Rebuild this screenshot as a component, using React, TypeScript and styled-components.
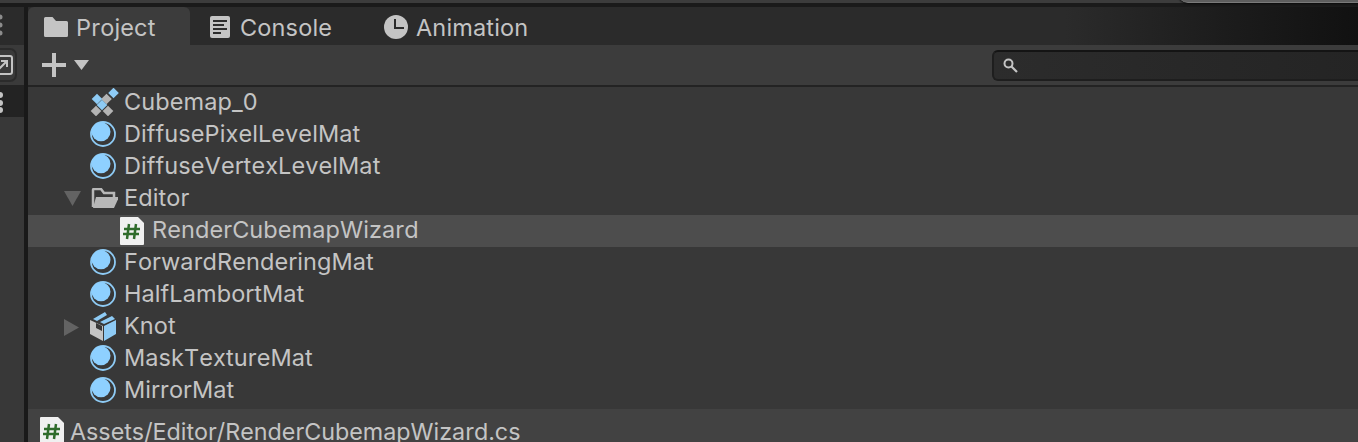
import { ReactNode } from "react";
import styled, { createGlobalStyle } from "styled-components";

const GlobalStyle = createGlobalStyle`
  html, body {
    margin: 0;
    padding: 0;
    background: #191919;
    overflow: hidden;
  }
`;

const Page = styled.div`
  width: 1358px;
  height: 442px;
  overflow: hidden;
  display: flex;
  flex-direction: column;
  font-family: Inter, "Liberation Sans", sans-serif;
  font-kerning: none;
  color: #c4c4c4;
`;

const TopStrip = styled.div`
  position: relative;
  height: 3px;
  flex: none;
  background: #3c3c3c;
  border-bottom: 4px solid #1a1a1a;
`;

const Popup = styled.div`
  position: absolute;
  top: -8px;
  left: 1178px;
  width: 200px;
  height: 10px;
  background: #5e5e5e;
  border-bottom: 1px solid #7a7a7a;
  border-radius: 0 0 0 10px;
  box-shadow: 0 1px 2px #0b0b0b;
`;

const Main = styled.div`
  flex: 1;
  min-height: 0;
  display: flex;
`;

const SideBar = styled.aside`
  width: 24px;
  flex: none;
  display: flex;
  flex-direction: column;
  background: #383838;
  border-right: 4px solid #191919;
`;

const SideHandle = styled.div`
  height: 38px;
  flex: none;
  box-sizing: border-box;
  padding-top: 7px;
  background: #2b2b2b;
`;

const SideTools = styled.div`
  height: 42px;
  flex: none;
  box-sizing: border-box;
  padding-top: 3px;
  background: #3a3a3a;
  border-bottom: 2px solid #232323;
`;

const SideButton = styled.div`
  width: 17px;
  height: 34px;
  box-sizing: border-box;
  display: flex;
  align-items: center;
  border: 2px solid #2b2b2b;
  border-left: none;
  border-radius: 0 7px 7px 0;
`;

const SideRow = styled.div`
  height: 30px;
  flex: none;
  box-sizing: border-box;
  padding-top: 5px;
  background: #232323;
`;

const Panel = styled.section`
  flex: 1;
  min-width: 0;
  display: flex;
  flex-direction: column;
  background: #383838;
`;

const TabBar = styled.div`
  height: 38px;
  flex: none;
  display: flex;
  background: linear-gradient(90deg, #2b2b2b 0%, #2b2b2b 78%, #1c1c1c 90%, #111111 100%);
`;

const Tab = styled.div<{ $active?: boolean; $width: number; $pad: number; $gap: number }>`
  width: ${(p) => p.$width}px;
  box-sizing: border-box;
  display: flex;
  align-items: center;
  gap: ${(p) => p.$gap}px;
  padding-left: ${(p) => p.$pad}px;
  padding-top: 2px;
  border-radius: 6px 6px 0 0;
  font-size: 23.5px;
  letter-spacing: 0.15px;
  color: #c4c4c4;
  background: ${(p) => (p.$active ? "#3c3c3c" : "transparent")};
`;

const Toolbar = styled.div`
  height: 42px;
  flex: none;
  box-sizing: border-box;
  display: flex;
  align-items: center;
  justify-content: space-between;
  background: #3c3c3c;
  border-bottom: 2px solid #232323;
`;

const AddButton = styled.div`
  display: flex;
  align-items: center;
  gap: 8px;
  padding-left: 14px;
`;

const SearchBox = styled.div`
  width: 380px;
  height: 31px;
  box-sizing: border-box;
  display: flex;
  align-items: center;
  padding-left: 9px;
  margin-right: -14px;
  border: 2px solid #1e1e1e;
  border-top-color: #141414;
  border-radius: 6px 0 0 6px;
  background: linear-gradient(90deg, #2c2c2c, #242424);
`;

const TreeList = styled.div`
  flex: 1;
  min-height: 0;
`;

const Row = styled.div<{ $selected?: boolean; $depth?: number }>`
  position: relative;
  height: 32px;
  box-sizing: border-box;
  display: flex;
  align-items: center;
  gap: 5px;
  padding-left: ${(p) => 62 + (p.$depth ?? 0) * 28}px;
  padding-bottom: 2px;
  font-size: 23.5px;
  letter-spacing: 0.08px;
  color: #c4c4c4;
  background: ${(p) => (p.$selected ? "#4d4d4d" : "transparent")};
`;

const IconSlot = styled.span<{ $inset?: boolean }>`
  width: 29px;
  height: 28px;
  flex: none;
  box-sizing: border-box;
  display: flex;
  align-items: center;
  justify-content: flex-start;
  padding-left: ${(p) => (p.$inset ? 2 : 0)}px;
  margin-top: ${(p) => (p.$inset ? 2 : 0)}px;
`;

const Label = styled.span`
  line-height: 28px;
  margin-top: -1px;
`;

const Arrow = styled.span`
  position: absolute;
  left: 36px;
  top: 8px;
  display: flex;
`;

const StatusBar = styled.div`
  height: 33px;
  flex: none;
  box-sizing: border-box;
  display: flex;
  align-items: flex-start;
  gap: 6px;
  padding: 8px 0 0 12px;
  background: #424242;
  font-size: 23.3px;
  line-height: 28px;
  color: #c4c4c4;
`;

const StatusText = styled.span`
  margin-top: 1px;
  white-space: nowrap;
`;

const HandleDots = () => (
  <svg width="4" height="22" viewBox="0 0 4 22">
    <circle cx="0" cy="3" r="2.500" fill="#8c8c8c" />
    <circle cx="0" cy="11" r="2.500" fill="#8c8c8c" />
    <circle cx="0" cy="19" r="2.500" fill="#8c8c8c" />
  </svg>
);

const ExternalIcon = () => (
  <svg width="13" height="20" viewBox="0 0 13 20">
    <path d="M-2 1H10Q12 1 12 3V17Q12 19 10 19H-2" fill="none" stroke="#c4c4c4" strokeWidth="2" />
    <path d="M-1 14L6 7M1 6H7V12" fill="none" stroke="#c4c4c4" strokeWidth="2" />
  </svg>
);

const RowDots = () => (
  <svg width="4" height="22" viewBox="0 0 4 22">
    <circle cx="0" cy="3" r="3" fill="#c4c4c4" />
    <circle cx="0" cy="11" r="3" fill="#c4c4c4" />
    <circle cx="0" cy="18" r="3" fill="#c4c4c4" />
  </svg>
);

const FolderIcon = () => (
  <svg width="24" height="20" viewBox="0 0 24 20">
    <path d="M0 1.500Q0 0 1.500 0H8.500L12 4H22.500Q24 4 24 5.500V18.500Q24 20 22.500 20H1.500Q0 20 0 18.500Z" fill="#c4c4c4" />
  </svg>
);

const ConsoleIcon = () => (
  <svg width="20" height="22" viewBox="0 0 20 22" style={{ marginRight: 2 }}>
    <rect width="20" height="22" rx="2" fill="#c4c4c4" />
    <path d="M3 5H17M3 9H14M3 13H17M3 17H11" stroke="#2c2c2c" strokeWidth="2" />
  </svg>
);

const ClockIcon = () => (
  <svg width="24" height="24" viewBox="0 0 24 24">
    <circle cx="12" cy="12" r="12" fill="#c4c4c4" />
    <path d="M11 4V13H20" fill="none" stroke="#2c2c2c" strokeWidth="2" />
  </svg>
);

const PlusIcon = () => (
  <svg width="24" height="24" viewBox="0 0 24 24">
    <path d="M12 0V24M0 12H24" stroke="#c4c4c4" strokeWidth="4" />
  </svg>
);

const CaretIcon = () => (
  <svg width="15" height="10" viewBox="0 0 15 10">
    <path d="M0 0H15L7.500 10Z" fill="#c4c4c4" />
  </svg>
);

const SearchIcon = () => (
  <svg width="15" height="15" viewBox="0 0 15 15">
    <circle cx="5.500" cy="5.500" r="4" fill="none" stroke="#c4c4c4" strokeWidth="2" />
    <path d="M8.500 8.500L14 14" stroke="#c4c4c4" strokeWidth="2.200" />
  </svg>
);

const cubeTiles = [
  { x: 23.5, y: 5, fill: "#8ecbf5" },
  { x: 16.500, y: 11, fill: "#b4b4b4" },
  { x: 7, y: 11, fill: "#8ecbf5" },
  { x: 12, y: 17, fill: "#8ecbf5" },
  { x: 6, y: 23, fill: "#b4b4b4" },
  { x: 18, y: 23, fill: "#b4b4b4" },
];

const TILE = 5.3;

const CubemapIcon = () => (
  <svg width="29" height="28" viewBox="0 0 29 28">
    {cubeTiles.map((t) => (
      <path
        key={`${t.x}-${t.y}`}
        d={`M${t.x} ${t.y - TILE}L${t.x + TILE} ${t.y}L${t.x} ${t.y + TILE}L${t.x - TILE} ${t.y}Z`}
        fill={t.fill}
      />
    ))}
  </svg>
);

const MaterialIcon = () => (
  <svg width="26" height="26" viewBox="0 0 26 26">
    <circle cx="13" cy="13" r="12" fill="none" stroke="#8ecbf5" strokeWidth="1.800" />
    <circle cx="11" cy="10.800" r="9.500" fill="#8ed0ff" />
  </svg>
);

const OpenFolderIcon = () => (
  <svg width="28" height="20" viewBox="0 0 28 20">
    <path d="M3 19V2Q3 1 4 1H11L14 5H24V9" fill="none" stroke="#b8b8b8" strokeWidth="2.500" />
    <path d="M6 9H29L24 20H3Z" fill="#b8b8b8" />
  </svg>
);

const ScriptIcon = () => (
  <svg width="24" height="28" viewBox="0 0 24 28">
    <path d="M0 1Q0 0 1 0H18L24 6V27Q24 28 23 28H1Q0 28 0 27Z" fill="#f0f0f0" />
    <path d="M9 7L7 22M16 7L14 22M4 12H20M3 17H19" stroke="#2f6b2b" strokeWidth="2.500" />
  </svg>
);

const PackageIcon = () => (
  <svg width="26" height="29" viewBox="0 0 26 29">
    <path d="M14 14L26 8V22L14 29Z" fill="#8ecbf5" />
    <path d="M0 8L13 14V29L0 22Z" fill="#c4c4c4" />
    <path d="M6 11L12 14V19L6 16Z" fill="#383838" />
    <path d="M3 7L15 0L17 3L7 9Z" fill="#8ecbf5" />
    <path d="M10 10L22 4L25 7L14 12Z" fill="#8ecbf5" />
  </svg>
);

const TriangleDown = () => (
  <svg width="17" height="15" viewBox="0 0 17 15">
    <path d="M0 0H17L8.500 15Z" fill="#636363" />
  </svg>
);

const TriangleRight = () => (
  <svg width="15" height="17" viewBox="0 0 15 17">
    <path d="M0 0L15 8.500L0 17Z" fill="#636363" />
  </svg>
);

interface AssetRowProps {
  name: string;
  icon: ReactNode;
  arrow?: ReactNode;
  selected?: boolean;
  depth?: number;
}

const AssetRow = ({ name, icon, arrow, selected, depth }: AssetRowProps) => {
  return (
    <Row $selected={selected} $depth={depth}>
      {arrow && <Arrow>{arrow}</Arrow>}
      <IconSlot $inset={!!depth}>{icon}</IconSlot>
      <Label>{name}</Label>
    </Row>
  );
};

const App = () => {
  return (
    <Page>
      <GlobalStyle />
      <TopStrip>
        <Popup />
      </TopStrip>
      <Main>
        <SideBar>
          <SideHandle>
            <HandleDots />
          </SideHandle>
          <SideTools>
            <SideButton>
              <ExternalIcon />
            </SideButton>
          </SideTools>
          <SideRow>
            <RowDots />
          </SideRow>
        </SideBar>
        <Panel>
          <TabBar>
            <Tab $active $width={162} $pad={16} $gap={8}>
              <FolderIcon />
              Project
            </Tab>
            <Tab $width={178} $pad={20} $gap={8}>
              <ConsoleIcon />
              Console
            </Tab>
            <Tab $width={200} $pad={16} $gap={8}>
              <ClockIcon />
              Animation
            </Tab>
          </TabBar>
          <Toolbar>
            <AddButton>
              <PlusIcon />
              <CaretIcon />
            </AddButton>
            <SearchBox>
              <SearchIcon />
            </SearchBox>
          </Toolbar>
          <TreeList>
            <AssetRow name="Cubemap_0" icon={<CubemapIcon />} />
            <AssetRow name="DiffusePixelLevelMat" icon={<MaterialIcon />} />
            <AssetRow name="DiffuseVertexLevelMat" icon={<MaterialIcon />} />
            <AssetRow name="Editor" icon={<OpenFolderIcon />} arrow={<TriangleDown />} />
            <AssetRow name="RenderCubemapWizard" icon={<ScriptIcon />} selected depth={1} />
            <AssetRow name="ForwardRenderingMat" icon={<MaterialIcon />} />
            <AssetRow name="HalfLambortMat" icon={<MaterialIcon />} />
            <AssetRow name="Knot" icon={<PackageIcon />} arrow={<TriangleRight />} />
            <AssetRow name="MaskTextureMat" icon={<MaterialIcon />} />
            <AssetRow name="MirrorMat" icon={<MaterialIcon />} />
          </TreeList>
          <StatusBar>
            <ScriptIcon />
            <StatusText>Assets/Editor/RenderCubemapWizard.cs</StatusText>
          </StatusBar>
        </Panel>
      </Main>
    </Page>
  );
};

export default App;
